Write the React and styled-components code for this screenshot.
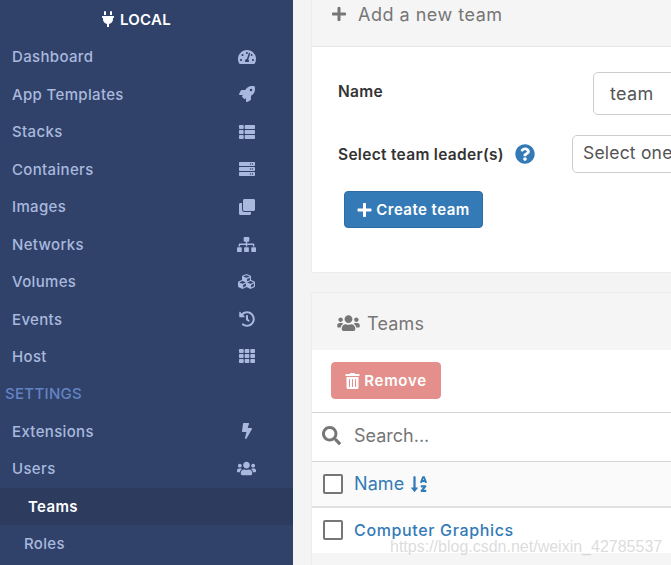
import React from "react";
import styled, { createGlobalStyle } from "styled-components";
import {
  FaPlug, FaTachometerAlt, FaRocket, FaThList, FaServer, FaClone, FaSitemap, FaCubes,
  FaHistory, FaTh, FaBolt, FaUsers, FaPlus, FaQuestionCircle, FaTrashAlt, FaSearch, FaSortAlphaDown,
} from "react-icons/fa";

const Global = createGlobalStyle`
  html, body { margin: 0; padding: 0; height: 100%; overflow: hidden; background: #f4f4f4; }
  body { font-family: Inter, "Open Sans", sans-serif; }
  * { box-sizing: border-box; }
`;

const Page = styled.div`
  display: flex;
  width: 671px;
  height: 565px;
  overflow: hidden;
  position: relative;
`;

const Sidebar = styled.nav`
  flex: 0 0 293px;
  background: #30426a;
  display: flex;
  flex-direction: column;
`;

const Brand = styled.div`
  height: 38px;
  display: flex;
  align-items: center;
  justify-content: center;
  gap: 5px;
  color: #fff;
  font-size: 15px;
  font-weight: 600;
  letter-spacing: 0.3px;
  padding-right: 21px;
  svg { width: 14px; height: 16px; }
`;

const NavRow = styled.div`
  height: 37.47px;
  display: flex;
  align-items: center;
  justify-content: space-between;
  padding: 0 37px 0 ${(p) => p.$indent || 12}px;
  font-size: 15px;
  font-weight: ${(p) => (p.$active ? 600 : 500)};
  letter-spacing: 0.34px;
  color: ${(p) => (p.$active ? "#fff" : "#a9b9de")};
  background: ${(p) => (p.$active ? "#2c3b5e" : "transparent")};
`;

const NavIcon = styled.span`
  flex: none;
  width: 19px;
  display: flex;
  justify-content: center;
  svg { width: ${(p) => p.$size}px; height: ${(p) => p.$size}px; }
`;

const SectionTitle = styled.div`
  height: 37.47px;
  display: flex;
  align-items: center;
  padding-left: 5px;
  font-size: 15px;
  font-weight: 500;
  letter-spacing: 0.3px;
  color: #6384c4;
`;

const Main = styled.main`
  flex: 1;
  padding-left: 19px;
  display: flex;
  flex-direction: column;
  gap: 21px;
  min-width: 0;
`;

const Panel = styled.section`
  width: 420px;
  background: #fff;
  box-shadow: 0 0 2px rgba(0, 0, 0, 0.1);
`;

const AddHeader = styled.header`
  height: 47px;
  padding: 0 0 18px 19px;
  display: flex;
  align-items: center;
  gap: 11px;
  background: #f5f5f5;
  border-bottom: 1px solid #e6e6e6;
  color: #767676;
  font-size: 18px;
  letter-spacing: 0.5px;
  svg { width: 16px; height: 16px; }
`;

const AddBody = styled.div`
  height: 225px;
  padding: 25px 0 0 26px;
  display: flex;
  flex-direction: column;
`;

const FieldRow = styled.div`
  display: flex;
  align-items: center;
  margin-bottom: ${(p) => p.$gap || 0}px;
`;

const Label = styled.label`
  width: ${(p) => p.$width}px;
  flex: none;
  display: flex;
  align-items: center;
  gap: 11px;
  color: #333;
  font-size: 15.5px;
  font-weight: 600;
  letter-spacing: 0.3px;
  padding-bottom: ${(p) => p.$lift || 0}px;
`;

const Help = styled(FaQuestionCircle)`
  width: 20px;
  height: 20px;
  color: #337ab7;
`;

const TextInput = styled.div`
  width: 200px;
  height: 43px;
  padding: 0 0 1px 16px;
  display: flex;
  align-items: center;
  border: 1px solid #ccc;
  border-radius: 5px;
  color: #555;
  font-size: 18px;
  letter-spacing: 0.3px;
  background: #fff;
`;

const SelectBox = styled.div`
  width: 220px;
  height: 38px;
  padding: 0 0 3px 10px;
  display: flex;
  align-items: center;
  border: 1px solid #ccc;
  border-radius: 5px;
  color: #555;
  font-size: 17.5px;
  letter-spacing: 0.2px;
  background: #fff;
`;

const Button = styled.div`
  height: 37px;
  display: inline-flex;
  align-items: center;
  justify-content: center;
  gap: 4px;
  width: ${(p) => p.$width}px;
  border-radius: 4px;
  color: #fff;
  font-size: 15px;
  font-weight: 600;
  letter-spacing: ${(p) => p.$track || 0.45}px;
  background: ${(p) => p.$bg};
  border: 1px solid ${(p) => p.$line};
  svg { width: 15px; height: 16px; }
`;

const CreateWrap = styled.div`
  padding-left: 6px;
`;

const TeamsHeader = styled.header`
  height: 57px;
  padding: 3px 0 0 25px;
  display: flex;
  align-items: center;
  gap: 7px;
  background: #f5f5f5;
  color: #767676;
  font-size: 18px;
  letter-spacing: 0.2px;
  svg { width: 23px; height: 18px; }
`;

const Toolbar = styled.div`
  height: 63px;
  padding: 12px 0 0 19px;
  border-bottom: 1px solid #d4d4d4;
`;

const SearchRow = styled.div`
  height: 49px;
  padding: 0 0 3px 10px;
  display: flex;
  align-items: center;
  gap: 13px;
  color: #767676;
  font-size: 18px;
  border-bottom: 1px solid #d4d4d4;
  svg { width: 19px; height: 19px; }
`;

const HeadRow = styled.div`
  height: 46px;
  padding: 0 0 1px 11px;
  display: flex;
  align-items: center;
  gap: 11px;
  background: #fafafa;
  color: #337ab7;
  font-size: 18px;
  letter-spacing: 0.1px;
  border-bottom: 2px solid #e0e0e0;
  svg { width: 18px; height: 18px; margin-left: -5px; }
`;

const BodyRow = styled.div`
  height: 45px;
  padding: 0 0 1px 11px;
  display: flex;
  align-items: center;
  gap: 11px;
  color: #337ab7;
  font-size: 16px;
  font-weight: 500;
  letter-spacing: 0.65px;
`;

const Check = styled.span`
  width: 20px;
  height: 20px;
  flex: none;
  border: 2px solid #767676;
  border-radius: 2px;
  background: #fff;
`;

const Footer = styled.div`
  height: 13px;
  background: #f5f5f5;
`;

const Watermark = styled.div`
  position: absolute;
  left: 390px;
  top: 538px;
  font-family: "Liberation Sans", Arial, sans-serif;
  font-size: 16px;
  color: rgba(190, 190, 190, 0.55);
  white-space: nowrap;
`;

const items = [
  ["Dashboard", FaTachometerAlt, 18],
  ["App Templates", FaRocket, 16],
  ["Stacks", FaThList, 16],
  ["Containers", FaServer, 16],
  ["Images", FaClone, 16],
  ["Networks", FaSitemap, 19],
  ["Volumes", FaCubes, 17],
  ["Events", FaHistory, 16],
  ["Host", FaTh, 16],
];

export default function App() {
  return (
    <Page>
      <Global />
      <Sidebar>
        <Brand><FaPlug />LOCAL</Brand>
        {items.map(([label, Icon, size]) => (
          <NavRow key={label}>{label}<NavIcon $size={size}><Icon /></NavIcon></NavRow>
        ))}
        <SectionTitle>SETTINGS</SectionTitle>
        <NavRow>Extensions<NavIcon $size={16}><FaBolt /></NavIcon></NavRow>
        <NavRow>Users<NavIcon $size={19}><FaUsers /></NavIcon></NavRow>
        <NavRow $active $indent={28}>Teams</NavRow>
        <NavRow $indent={24}>Roles</NavRow>
      </Sidebar>
      <Main>
        <Panel>
          <AddHeader><FaPlus />Add a new team</AddHeader>
          <AddBody>
            <FieldRow $gap={20}>
              <Label $width={255} $lift={4}>Name</Label>
              <TextInput>team</TextInput>
            </FieldRow>
            <FieldRow $gap={18}>
              <Label $width={234}>Select team leader(s)<Help /></Label>
              <SelectBox>Select one</SelectBox>
            </FieldRow>
            <CreateWrap>
              <Button $width={139} $bg="#337ab7" $line="#2e6da4"><FaPlus />Create team</Button>
            </CreateWrap>
          </AddBody>
        </Panel>
        <Panel>
          <TeamsHeader><FaUsers />Teams</TeamsHeader>
          <Toolbar>
            <Button $width={110} $track={0.7} $bg="#e48f8b" $line="#e48f8b"><FaTrashAlt />Remove</Button>
          </Toolbar>
          <SearchRow><FaSearch />Search...</SearchRow>
          <HeadRow><Check />Name<FaSortAlphaDown /></HeadRow>
          <BodyRow><Check />Computer Graphics</BodyRow>
          <Footer />
        </Panel>
      </Main>
      <Watermark>https://blog.csdn.net/weixin_42785537</Watermark>
    </Page>
  );
}
